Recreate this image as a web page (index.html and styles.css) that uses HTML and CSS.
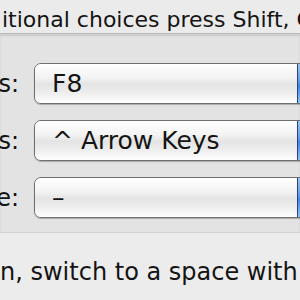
FILE: index.html
```html
<!DOCTYPE html>
<html lang="en">
<head>
    <meta charset="UTF-8">
    <title>Spaces</title>
    <link rel="stylesheet" href="styles.css">
</head>
<body>
    <div class="hint">itional choices press Shift, Control, Option, or Command)</div>

    <div class="group">
        <div class="row">
            <div class="label"><span>Activate Spaces:</span></div>
            <div class="popup">
                <div class="popup-value">F8</div>
                <div class="popup-arrow"></div>
            </div>
        </div>
        <div class="row">
            <div class="label"><span>To switch between spaces:</span></div>
            <div class="popup">
                <div class="popup-value">^ Arrow Keys</div>
                <div class="popup-arrow"></div>
            </div>
        </div>
        <div class="row">
            <div class="label"><span>To switch directly to a space:</span></div>
            <div class="popup">
                <div class="popup-value">–</div>
                <div class="popup-arrow"></div>
            </div>
        </div>
    </div>

    <div class="option">n, switch to a space with open windows for the application</div>
</body>
</html>
```

FILE: styles.css
```css
* {
    margin: 0;
    padding: 0;
    box-sizing: border-box;
}

body {
    width: 300px;
    height: 300px;
    overflow: hidden;
    background: #ececec;
    color: #141414;
    font-family: "DejaVu Sans", "Liberation Sans", sans-serif;
    font-size: 24px;
}

.hint {
    height: 33px;
    padding: 8px 0 0 2px;
    font-size: 22px;
    line-height: 24px;
    white-space: nowrap;
    overflow: hidden;
    background: #ebebeb;
}

.group {
    display: flex;
    flex-direction: column;
    gap: 16px;
    padding: 29px 0 14px;
    background: #e3e3e3;
    border-top: 1px solid #bcbcbc;
    border-bottom: 1px solid #d2d2d2;
    box-shadow: inset 0 2px 2px rgba(0, 0, 0, 0.1);
}

.row {
    display: flex;
    align-items: center;
    gap: 15px;
}

.label {
    width: 19px;
    flex-shrink: 0;
    display: flex;
    justify-content: flex-end;
    overflow: hidden;
    white-space: nowrap;
}

.popup {
    display: flex;
    flex-shrink: 0;
    width: 310px;
    height: 41px;
    border: 1px solid #6f6f6f;
    border-radius: 7px;
    box-shadow: 0 1px 1px rgba(0, 0, 0, 0.25);
    overflow: hidden;
}

.popup-value {
    width: 262px;
    padding-left: 17px;
    line-height: 39px;
    font-size: 25px;
    white-space: nowrap;
    background: linear-gradient(#ffffff 0%, #f3f3f3 35%, #e4e4e4 52%, #eeeeee 75%, #ffffff 100%);
}

.popup-arrow {
    flex: 1;
    border-left: 1px solid #2d3f86;
    background: linear-gradient(#9cc6f2 0%, #5c9de6 45%, #3d87e0 55%, #8fc6f6 100%);
}

.option {
    padding-top: 25px;
    line-height: 28px;
    white-space: nowrap;
    overflow: hidden;
}
```
